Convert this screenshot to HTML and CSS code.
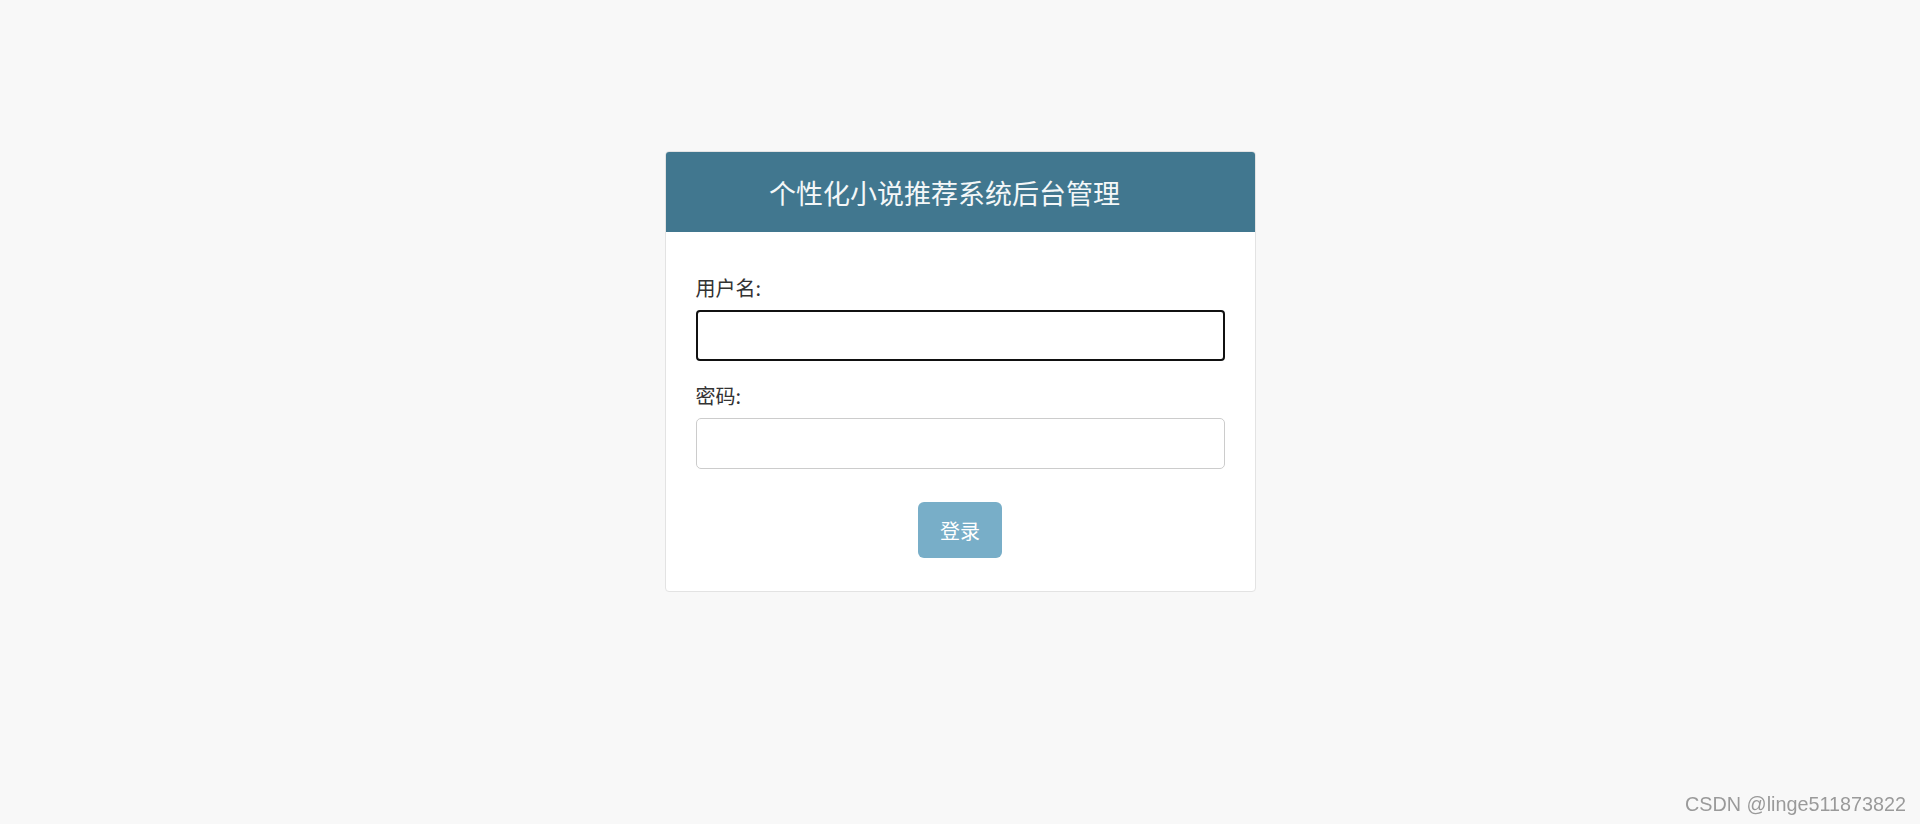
FILE: index.html
```html
<!DOCTYPE html>
<html lang="zh-CN">
<head>
<meta charset="utf-8">
<title>个性化小说推荐系统后台管理</title>
<link rel="stylesheet" href="styles.css">
</head>
<body>
<div class="page">
  <div class="card">
    <div class="card-header">
      <h3 class="title">个性化小说推荐系统后台管理</h3>
    </div>
    <form class="card-body">
      <div class="form-group">
        <label class="label" for="username">用户名:</label>
        <input class="input input-focus" id="username" type="text">
      </div>
      <div class="form-group">
        <label class="label" for="password">密码:</label>
        <input class="input" id="password" type="password">
      </div>
      <div class="actions">
        <button class="btn" type="button">登录</button>
      </div>
    </form>
  </div>
</div>
<div class="watermark">CSDN @linge511873822</div>
</body>
</html>
```

FILE: styles.css
```css
* {
  box-sizing: border-box;
}

html, body {
  margin: 0;
  padding: 0;
  height: 100%;
}

body {
  background: #f8f8f8;
  font-family: "Noto Sans CJK SC", "Liberation Sans", sans-serif;
  color: #333;
}

.page {
  display: flex;
  justify-content: center;
  padding-top: 151px;
}

.card {
  width: 591px;
  background: #fff;
  border: 1px solid #e3e3e3;
  border-radius: 4px;
  overflow: hidden;
}

.card-header {
  height: 80px;
  background: #41778f;
  display: flex;
  align-items: center;
  justify-content: center;
  padding-right: 31px;
}

.title {
  margin: 0;
  font-size: 27px;
  font-weight: 400;
  line-height: 1;
  color: #f4f7f8;
}

.card-body {
  padding: 42px 30px 33px 30px;
  display: flex;
  flex-direction: column;
}

.form-group {
  display: flex;
  flex-direction: column;
  margin-bottom: 21px;
}

.label {
  font-size: 20px;
  line-height: 28px;
  color: #333;
  margin-bottom: 8px;
}

.input {
  width: 100%;
  height: 51px;
  border: 1px solid #cccccc;
  border-radius: 5px;
  background: #fff;
  font-size: 18px;
  padding: 0 12px;
  outline: none;
}

.input-focus {
  border: 2px solid #111;
  border-radius: 4px;
}

.actions {
  display: flex;
  justify-content: center;
  padding-top: 12px;
}

.btn {
  width: 84px;
  height: 56px;
  border: none;
  border-radius: 6px;
  background: #78aec8;
  color: #fff;
  font-family: "Noto Sans CJK SC", sans-serif;
  font-size: 20px;
  cursor: pointer;
}

.watermark {
  position: fixed;
  right: 14px;
  bottom: 9px;
  font-family: "Liberation Sans", Arial, sans-serif;
  font-size: 19.8px;
  line-height: 22px;
  color: #9a9a9a;
}
```
